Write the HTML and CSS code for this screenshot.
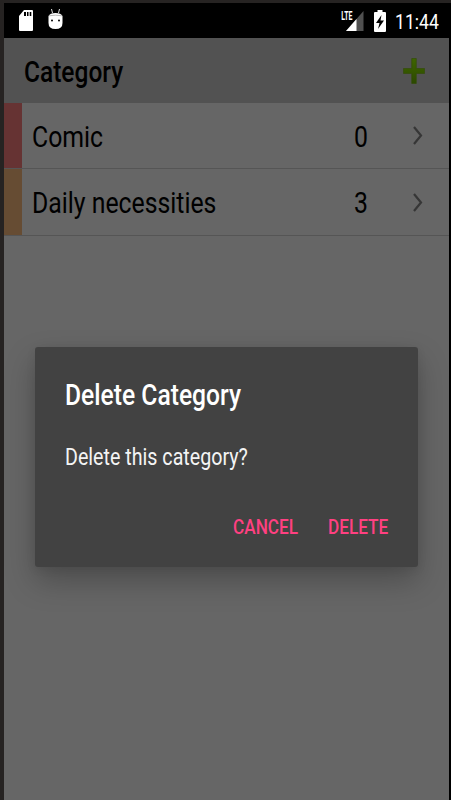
FILE: index.html
```html
<!DOCTYPE html>
<html lang="en">
<head>
<meta charset="utf-8">
<title>Category</title>
<link rel="stylesheet" href="styles.css">
</head>
<body>
<div class="device">
  <header class="status">
    <svg class="sd" width="14" height="21" viewBox="0 0 14 21"><path fill="#fff" fill-rule="evenodd" d="M5 0H13Q14 0 14 1V20Q14 21 13 21H1Q0 21 0 20V6ZM5 2V6H7V2ZM8 2V6H9.500V2ZM10.700 2V6H12.300V2Z"/></svg>
    <svg class="droid" width="15" height="21" viewBox="0 0 15 21"><path fill="#fff" d="M.5 7Q2 4 7.500 4T14.500 7V14Q14.500 20 7.500 20T.5 14Z"/><path d="M3.500 0L4.500 4M11.500 0L10.500 4" stroke="#ddd" stroke-width="1"/><path d="M1 6.800Q7.500 5.500 14 6.800" stroke="#999" stroke-width=".7" fill="none"/><circle cx="4" cy="11.500" r="1" fill="#000"/><circle cx="11" cy="11.500" r="1" fill="#000"/></svg>
    <span class="spacer"></span>
    <svg class="signal" width="23" height="23" viewBox="0 0 23 23"><path fill="#505050" d="M22.500 1V21H5Z"/><path fill="#fff" d="M15.500 9V21H5Z"/><text class="lte" x="0.300" y="9.500" textLength="11.200" lengthAdjust="spacingAndGlyphs">LTE</text></svg>
    <svg class="battery" width="12" height="22" viewBox="0 0 12 22"><path fill="#fff" d="M3.500 0H8.500V2H11Q12 2 12 3V21Q12 22 11 22H1Q0 22 0 21V3Q0 2 1 2H3.500Z"/><path fill="#000" d="M7.500 5L2 13H5.500L4 19L10 10.500H6.500Z"/></svg>
    <span class="clock"><span class="t t-clock">11:44</span></span>
  </header>
  <div class="bar">
    <h1 class="t t-bar">Category</h1>
    <svg class="plus" width="22" height="26" viewBox="0 0 22 26"><defs><linearGradient id="g" x2="0" y2="1"><stop offset="0" stop-color="#3f6500"/><stop offset="1" stop-color="#2c4900"/></linearGradient></defs><path fill="url(#g)" stroke="#304c05" stroke-width=".6" d="M8.700 .5H13.300V10.500H21.500V15.500H13.300V25.500H8.700V15.500H.5V10.500H8.700Z"/></svg>
  </div>
  <ul class="list">
    <li class="row"><span class="tag red"></span><span class="name"><span class="t t-comic">Comic</span></span><span class="count"><span class="t t-num">0</span></span><svg class="chev" width="10" height="19" viewBox="0 0 10 19"><path d="M1 1L8 9.500L1 18"/></svg></li>
    <li class="row"><span class="tag orange"></span><span class="name"><span class="t t-daily">Daily necessities</span></span><span class="count"><span class="t t-num">3</span></span><svg class="chev" width="10" height="19" viewBox="0 0 10 19"><path d="M1 1L8 9.500L1 18"/></svg></li>
  </ul>
</div>
<section class="dialog" role="dialog">
  <h2 class="t t-title">Delete Category</h2>
  <p class="t t-body">Delete this category?</p>
  <div class="actions"><span class="btn cancel"><span class="t t-btn">CANCEL</span></span><span class="btn"><span class="t t-btn">DELETE</span></span></div>
</section>
</body>
</html>
```
FILE: styles.css
```css
* { box-sizing: border-box; margin: 0; padding: 0; }
body { width: 451px; height: 800px; overflow: hidden; background: #262322; font-family: Roboto, sans-serif; }
svg { display: block; flex: none; }
.device { margin-left: 4px; width: 445px; height: 800px; padding-top: 3px; background: #666; background-clip: content-box; box-shadow: 3px 3px 0 #000; }
.t { display: inline-block; white-space: nowrap; transform-origin: 0 50%; font-weight: 400; }
.status { height: 35px; display: flex; align-items: flex-start; background: #000; padding: 7px 10px 0 15px; color: #fff; }
.droid { margin-left: 15px; margin-top: -1px; }
.spacer { flex: 1; }
.signal { margin-right: 10px; overflow: visible; }
.lte { font: 700 12px Roboto, sans-serif; fill: #fff; }
.battery { margin-right: 9px; }
.clock { width: 44px; line-height: 25px; }
.t-clock { font-size: 20px; transform: scaleX(.88); }
.bar { height: 65px; display: flex; align-items: center; justify-content: space-between; padding: 1px 24px 0 20px; background: #525252; }
.t-bar { padding-top: 2px; font-size: 29px; font-weight: 500; transform: scaleX(.845); }
.list { list-style: none; }
.row { height: 66px; display: flex; align-items: center; border-bottom: 1px solid #555; }
.row + .row { height: 67px; padding-bottom: 0; }
.tag { width: 18px; align-self: stretch; }
.red { background: #663333; }
.orange { background: #664c33; }
.name { flex: 1; padding-left: 10px; font-size: 29px; padding-top: 3px; }
.count { width: 59px; font-size: 29px; padding-top: 3px; }
.row + .row .name, .row + .row .count { padding-top: 1px; }
.t-comic, .t-daily, .t-num { transform: scaleX(.855); }
.chev { margin-right: 26px; fill: none; stroke: #363636; stroke-width: 2.2; }
.dialog { position: absolute; left: 35px; top: 347px; width: 383px; height: 220px; padding: 30px 30px 0 29.500px; background: #424242; border-radius: 3px; color: #fff; box-shadow: 0 14px 30px rgba(0,0,0,.25), 0 2px 10px rgba(0,0,0,.08); }
.t-title { display: block; font-size: 29px; line-height: 36px; font-weight: 500; transform: scaleX(.85); }
.t-body { display: block; margin-top: 31px; font-size: 23px; line-height: 28px; transform: scaleX(.855); color: #f4f4f4; }
.actions { display: flex; justify-content: flex-end; margin-top: 41px; color: #ff4081; line-height: 28px; }
.btn { width: 60.500px; }
.cancel { width: 65px; margin-right: 30px; }
.t-btn { font-size: 20px; font-weight: 500; transform: scaleX(.86); }
```
